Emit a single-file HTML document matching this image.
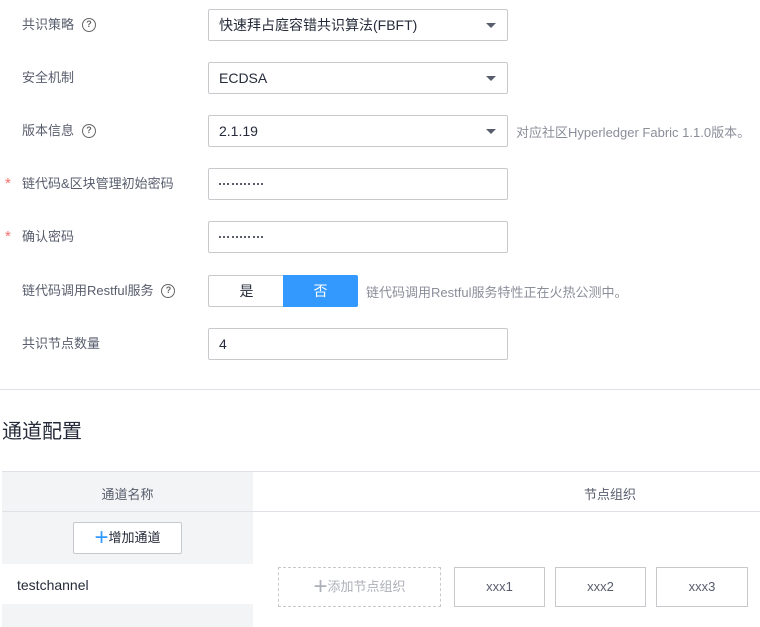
<!DOCTYPE html>
<html><head><meta charset="utf-8"><style>
*{margin:0;padding:0;box-sizing:border-box}
body{width:760px;height:627px;background:#fff;position:relative;overflow:hidden;font-family:"Liberation Sans","Noto Sans CJK SC",sans-serif;font-size:13px;color:#252b3a}
.a{position:absolute}
.lbl{position:absolute;left:22px;color:#575d6c;line-height:16px;white-space:nowrap;display:flex;align-items:center}
.star{position:absolute;left:5px;color:#f66f6a;line-height:16px;font-size:15px}
.q{display:inline-block;width:14px;height:14px;border:1.5px solid #666;border-radius:50%;font-size:9px;font-weight:bold;text-align:center;line-height:11px;color:#666;margin-left:8px}
.inp{position:absolute;left:208px;width:300px;height:32px;border:1px solid #c7c9cc;border-radius:2px;padding-left:10px;line-height:30px;color:#252b3a;font-size:14px}
.pw{display:flex;align-items:center;gap:2.2px}
.pw i{display:block;width:2px;height:2px;background:#252b3a;border-radius:1px}
.arr{position:absolute;right:11px;top:13px;width:0;height:0;border-left:5px solid transparent;border-right:5px solid transparent;border-top:5px solid #575d6c}
.tip{position:absolute;color:#8a8e99;font-size:13px;white-space:nowrap}
.box{position:absolute;top:567px;height:40px;border:1px solid #c7c9cc;text-align:center;line-height:38px;color:#575d6c}
</style></head><body>
<div class="lbl" style="top:17px">共识策略<span class="q">?</span></div>
<div class="inp" style="top:9px">快速拜占庭容错共识算法(FBFT)<span class="arr"></span></div>
<div class="lbl" style="top:70px">安全机制</div>
<div class="inp" style="top:62px">ECDSA<span class="arr"></span></div>
<div class="lbl" style="top:123px">版本信息<span class="q">?</span></div>
<div class="inp" style="top:115px">2.1.19<span class="arr"></span></div>
<div class="tip" style="left:516px;top:122px">对应社区Hyperledger Fabric 1.1.0版本。</div>
<div class="star" style="top:176px">*</div>
<div class="lbl" style="top:176px">链代码&amp;区块管理初始密码</div>
<div class="inp pw" style="top:168px"><i></i><i></i><i></i><i></i><i></i><i></i><i></i><i></i><i></i><i></i><i></i></div>
<div class="star" style="top:229px">*</div>
<div class="lbl" style="top:229px">确认密码</div>
<div class="inp pw" style="top:221px"><i></i><i></i><i></i><i></i><i></i><i></i><i></i><i></i><i></i><i></i><i></i></div>
<div class="lbl" style="top:283px">链代码调用Restful服务<span class="q">?</span></div>
<div class="a" style="left:208px;top:275px;width:76px;height:32px;border:1px solid #c7c9cc;border-right:none;border-radius:2px 0 0 2px;text-align:center;line-height:30px;font-size:14px">是</div>
<div class="a" style="left:283px;top:275px;width:75px;height:32px;background:#3399ff;border-radius:0 2px 2px 0;color:#fff;text-align:center;line-height:32px;font-size:14px">否</div>
<div class="tip" style="left:366px;top:282px">链代码调用Restful服务特性正在火热公测中。</div>
<div class="lbl" style="top:336px">共识节点数量</div>
<div class="inp" style="top:328px">4</div>
<div class="a" style="left:0;top:389px;width:760px;height:1px;background:#dfe1e6"></div>
<div class="a" style="left:2px;top:420px;font-size:20px;color:#252b3a;line-height:24px">通道配置</div>
<div class="a" style="left:2px;top:471px;width:758px;height:1px;background:#dfe1e6"></div>
<div class="a" style="left:2px;top:472px;width:251px;height:155px;background:#f3f4f5"></div>
<div class="a" style="left:2px;top:511px;width:758px;height:1px;background:#dfe1e6"></div>
<div class="a" style="left:2px;top:484px;width:251px;text-align:center;color:#575d6c">通道名称</div>
<div class="a" style="left:253px;top:484px;width:714px;text-align:center;color:#575d6c">节点组织</div>
<div class="a" style="left:73px;top:522px;width:109px;height:32px;border:1px solid #c7c9cc;border-radius:2px;background:#fff;text-align:center;line-height:30px;color:#252b3a"><span style="color:#3399ff;font-size:24px;vertical-align:-3px">+</span>增加通道</div>
<div class="a" style="left:2px;top:564px;width:251px;height:40px;background:#fff;padding-left:15px;line-height:42px;color:#252b3a;font-size:14px">testchannel</div>
<div class="box" style="left:278px;width:163px;border:1px dashed #c7c9cc;color:#adb0b8"><span style="font-size:24px;vertical-align:-3px">+</span>添加节点组织</div>
<div class="box" style="left:454px;width:91px">xxx1</div>
<div class="box" style="left:555px;width:91px">xxx2</div>
<div class="box" style="left:656px;width:92px">xxx3</div>
</body></html>
